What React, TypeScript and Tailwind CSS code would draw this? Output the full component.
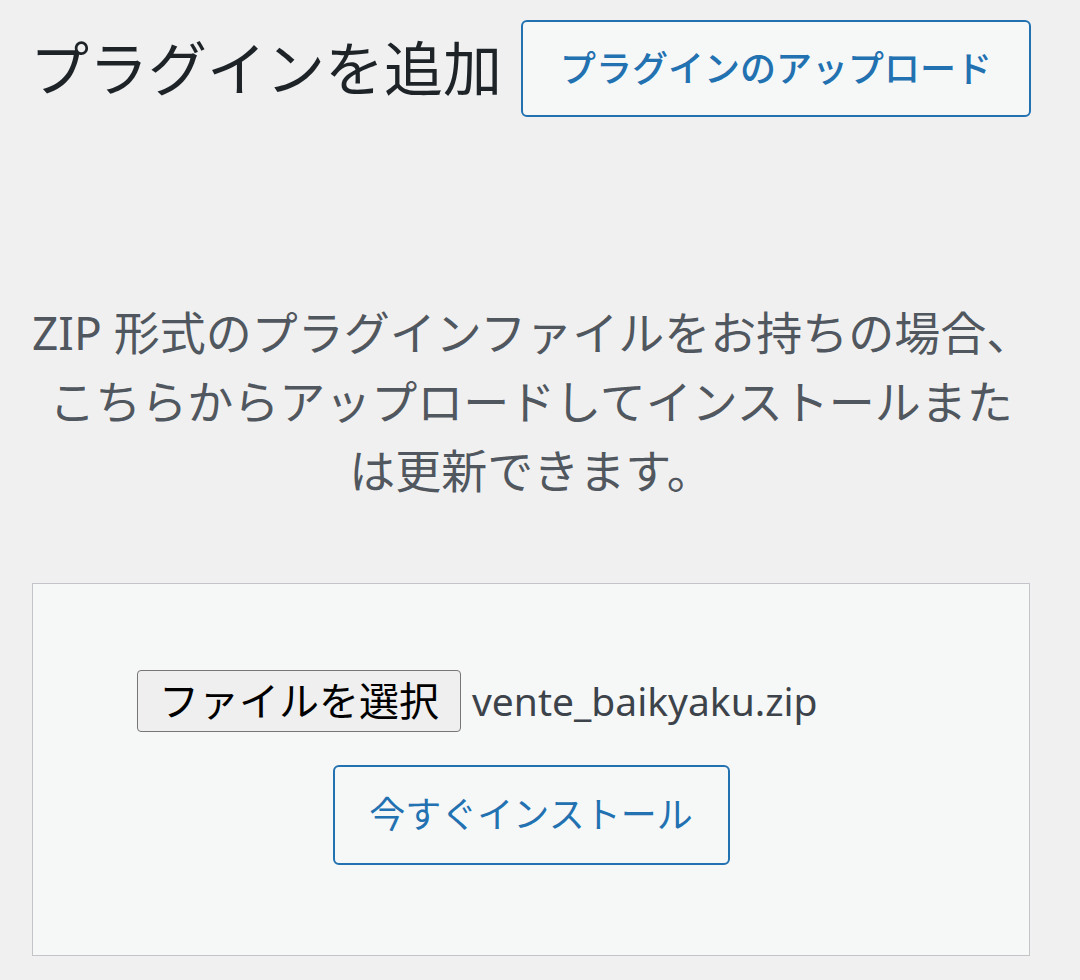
import React from 'react';

const font = { fontFamily: '"Noto Sans", "Noto Sans CJK JP", sans-serif' };

export default function App() {
  return (
    <div className="min-h-[980px] w-[1080px] bg-[#f0f0f1] text-[#1d2327]" style={font}>
      <div className="flex items-center gap-[19px] pl-[30px] pt-[20px]">
        <h1 className="text-[59px] font-normal leading-none text-[#1d2327]">プラグインを追加</h1>
        <button className="flex h-[97px] w-[510px] items-center justify-center rounded-[6px] border-2 border-[#2271b1] bg-[#f6f7f7] text-[36px] font-medium text-[#2271b1]">
          プラグインのアップロード
        </button>
      </div>

      <p className="mx-[32px] mt-[181px] w-[998px] text-center text-[46px] leading-[69px] whitespace-nowrap text-[#50575e]">
        ZIP 形式のプラグインファイルをお持ちの場合、
        <br />
        こちらからアップロードしてインストールまた
        <br />
        は更新できます。
      </p>

      <div className="mx-[32px] mt-[78px] flex h-[373px] w-[998px] flex-col items-center border border-[#c3c4c7] bg-[#f6f7f7] pt-[86px]">
        <div className="flex w-[788px] items-center">
          <span className="flex h-[62px] items-center rounded-[4px] border border-[#767676] bg-[#efefef] px-[21px] text-[40px] text-black">
            ファイルを選択
          </span>
          <span className="ml-[11px] text-[39px] text-[#3c434a]">vente_baikyaku.zip</span>
        </div>
        <button className="mt-[33px] flex h-[100px] w-[397px] items-center justify-center rounded-[6px] border-2 border-[#2271b1] bg-[#f6f7f7] text-[36px] text-[#2271b1]">
          今すぐインストール
        </button>
      </div>
    </div>
  );
}
